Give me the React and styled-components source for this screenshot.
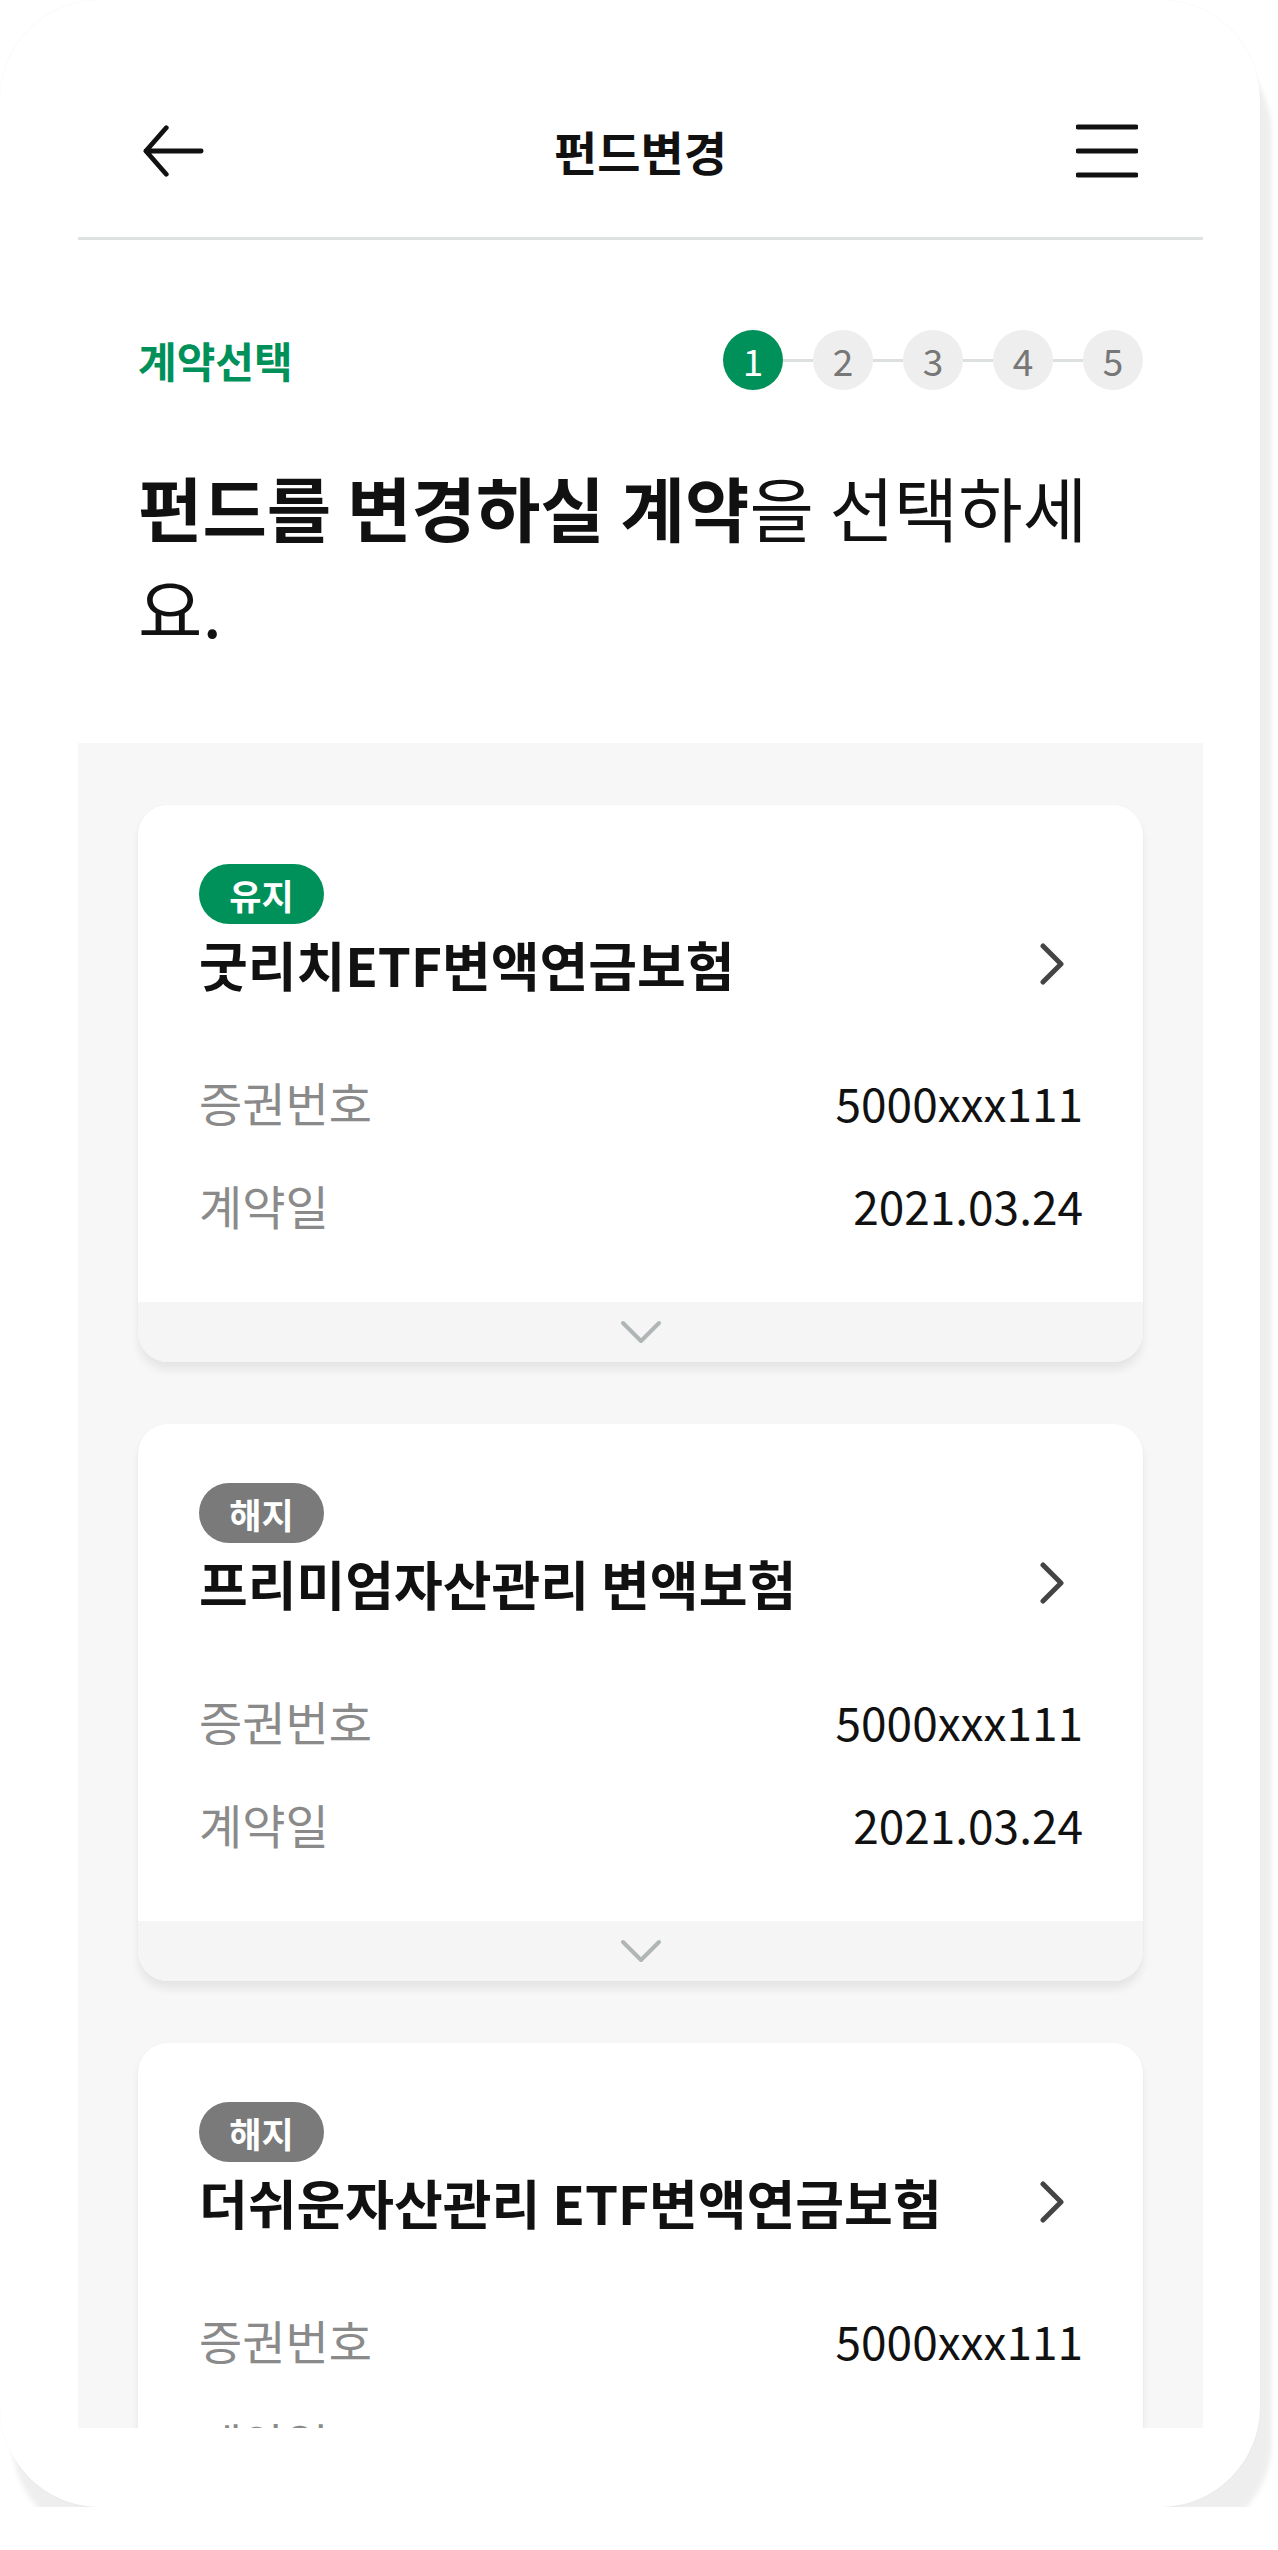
import React from "react";
import styled, { createGlobalStyle } from "styled-components";

const GlobalStyle = createGlobalStyle`
  html, body { margin: 0; padding: 0; background: #ffffff; }
  body { font-family: "Noto Sans CJK KR", "Noto Sans", sans-serif; color: #111; }
  * { box-sizing: border-box; }
`;

const GREEN = "#00915a";

const Frame = styled.div`
  width: 1260px;
  height: 2507px;
  background: #fff;
  border-radius: 100px;
  box-shadow: 12px 34px 5px rgba(0, 0, 0, 0.065), 0 0 2px rgba(0, 0, 0, 0.06);
  overflow: hidden;
  padding: 0 57px 0 78px;
`;

const Header = styled.header`
  margin-top: 100px;
  height: 102px;
  padding: 0 65px;
  display: flex;
  align-items: center;
  justify-content: space-between;
`;

const IconButton = styled.button`
  width: 62px;
  height: 54px;
  padding: 0;
  border: 0;
  background: none;
  display: flex;
  align-items: center;
  justify-content: center;
`;

const HeaderTitle = styled.h1`
  margin: 0;
  font-size: 47px;
  font-weight: 700;
  line-height: 64px;
  color: #111;
`;

const Divider = styled.div`
  margin-top: 35px;
  height: 3px;
  background: #dfe2e2;
`;

const Intro = styled.section`
  padding: 90px 60px 0;
`;

const StepRow = styled.div`
  height: 60px;
  display: flex;
  align-items: center;
  justify-content: space-between;
`;

const StepLabel = styled.span`
  font-size: 42px;
  font-weight: 700;
  color: ${GREEN};
  line-height: 56px;
`;

const Stepper = styled.ol`
  margin: 0;
  padding: 0;
  list-style: none;
  display: flex;
  align-items: center;
`;

const Connector = styled.li`
  width: 30px;
  height: 3px;
  background: #dde0e0;
`;

const StepDot = styled.li`
  width: 60px;
  height: 60px;
  border-radius: 50%;
  display: flex;
  align-items: center;
  justify-content: center;
  font-size: 37px;
  font-weight: 400;
  line-height: 1;
  background: ${(p) => (p.$active ? GREEN : "#eeeeee")};
  color: ${(p) => (p.$active ? "#ffffff" : "#777777")};
`;

const Heading = styled.h2`
  margin: 66px 0 0;
  padding-right: 20px;
  font-size: 70px;
  line-height: 101px;
  font-weight: 400;
  color: #111;
  strong { font-weight: 700; }
`;

const CardList = styled.section`
  margin-top: 85px;
  height: 1685px;
  overflow: hidden;
  background: #f7f7f7;
  padding: 62px 60px;
  display: flex;
  flex-direction: column;
  gap: 62px;
`;

const Card = styled.article`
  flex: none;
  background: #fff;
  border-radius: 30px;
  box-shadow: 0 8px 8px rgba(0, 0, 0, 0.07), 0 0 2px rgba(0, 0, 0, 0.04);
  overflow: hidden;
`;

const CardBody = styled.div`
  padding: 59px 60px 66px 61px;
`;

const Badge = styled.span`
  display: inline-flex;
  align-items: center;
  justify-content: center;
  width: 125px;
  height: 60px;
  border-radius: 30px;
  font-size: 35px;
  font-weight: 700;
  line-height: 1;
  color: #fff;
  background: ${(p) => (p.$status === "유지" ? GREEN : "#7a7a7a")};
`;

const TitleRow = styled.div`
  margin-top: 5px;
  height: 70px;
  display: flex;
  align-items: center;
  justify-content: space-between;
  padding-right: 19px;
`;

const CardTitle = styled.h3`
  margin: 0;
  font-size: 53px;
  font-weight: 700;
  line-height: 70px;
  color: #111;
`;

const InfoList = styled.dl`
  margin: 72px 0 0;
  display: flex;
  flex-direction: column;
  gap: 41px;
`;

const InfoRow = styled.div`
  height: 62px;
  display: flex;
  align-items: center;
  justify-content: space-between;
`;

const InfoLabel = styled.dt`
  font-size: 47px;
  color: #8a8a8a;
  line-height: 62px;
`;

const InfoValue = styled.dd`
  margin: 0;
  font-size: 46px;
  color: #111;
  line-height: 62px;
`;

const CardFooter = styled.div`
  height: 60px;
  background: #f5f5f5;
  display: flex;
  align-items: center;
  justify-content: center;
`;

const BackIcon = () => (
  <svg width="64" height="54" viewBox="0 0 64 54" fill="none">
    <path d="M24 3 L3 27 L24 51 M3 27 H60" stroke="#111" strokeWidth="5" strokeLinecap="round" strokeLinejoin="round" />
  </svg>
);

const MenuIcon = () => (
  <svg width="62" height="54" viewBox="0 0 62 54" fill="none">
    <path d="M2 3 H60 M2 27 H60 M2 51 H60" stroke="#111" strokeWidth="5" strokeLinecap="round" />
  </svg>
);

const ChevronRight = () => (
  <svg width="24" height="42" viewBox="0 0 24 42" fill="none">
    <path d="M3 3 L21 21 L3 39" stroke="#444" strokeWidth="5" strokeLinecap="round" strokeLinejoin="round" />
  </svg>
);

const ChevronDown = () => (
  <svg width="42" height="24" viewBox="0 0 42 24" fill="none">
    <path d="M3 3 L21 21 L39 3" stroke="#b0b6b6" strokeWidth="4" strokeLinecap="round" strokeLinejoin="round" />
  </svg>
);

const contracts = [
  { status: "유지", name: "굿리치ETF변액연금보험", no: "5000xxx111", date: "2021.03.24" },
  { status: "해지", name: "프리미엄자산관리 변액보험", no: "5000xxx111", date: "2021.03.24" },
  { status: "해지", name: "더쉬운자산관리 ETF변액연금보험", no: "5000xxx111", date: "2021.03.24" },
];

export default function App() {
  return (
    <>
      <GlobalStyle />
      <Frame>
        <Header>
          <IconButton aria-label="뒤로"><BackIcon /></IconButton>
          <HeaderTitle>펀드변경</HeaderTitle>
          <IconButton aria-label="메뉴"><MenuIcon /></IconButton>
        </Header>
        <Divider />
        <Intro>
          <StepRow>
            <StepLabel>계약선택</StepLabel>
            <Stepper>
              {[1, 2, 3, 4, 5].map((n) => (
                <React.Fragment key={n}>
                  {n > 1 && <Connector />}
                  <StepDot $active={n === 1}>{n}</StepDot>
                </React.Fragment>
              ))}
            </Stepper>
          </StepRow>
          <Heading>
            <strong>펀드를 변경하실 계약</strong>을 선택하세요.
          </Heading>
        </Intro>
        <CardList>
          {contracts.map((c, i) => (
            <Card key={i}>
              <CardBody>
                <Badge $status={c.status}>{c.status}</Badge>
                <TitleRow>
                  <CardTitle>{c.name}</CardTitle>
                  <ChevronRight />
                </TitleRow>
                <InfoList>
                  <InfoRow>
                    <InfoLabel>증권번호</InfoLabel>
                    <InfoValue>{c.no}</InfoValue>
                  </InfoRow>
                  <InfoRow>
                    <InfoLabel>계약일</InfoLabel>
                    <InfoValue>{c.date}</InfoValue>
                  </InfoRow>
                </InfoList>
              </CardBody>
              <CardFooter><ChevronDown /></CardFooter>
            </Card>
          ))}
        </CardList>
      </Frame>
    </>
  );
}
